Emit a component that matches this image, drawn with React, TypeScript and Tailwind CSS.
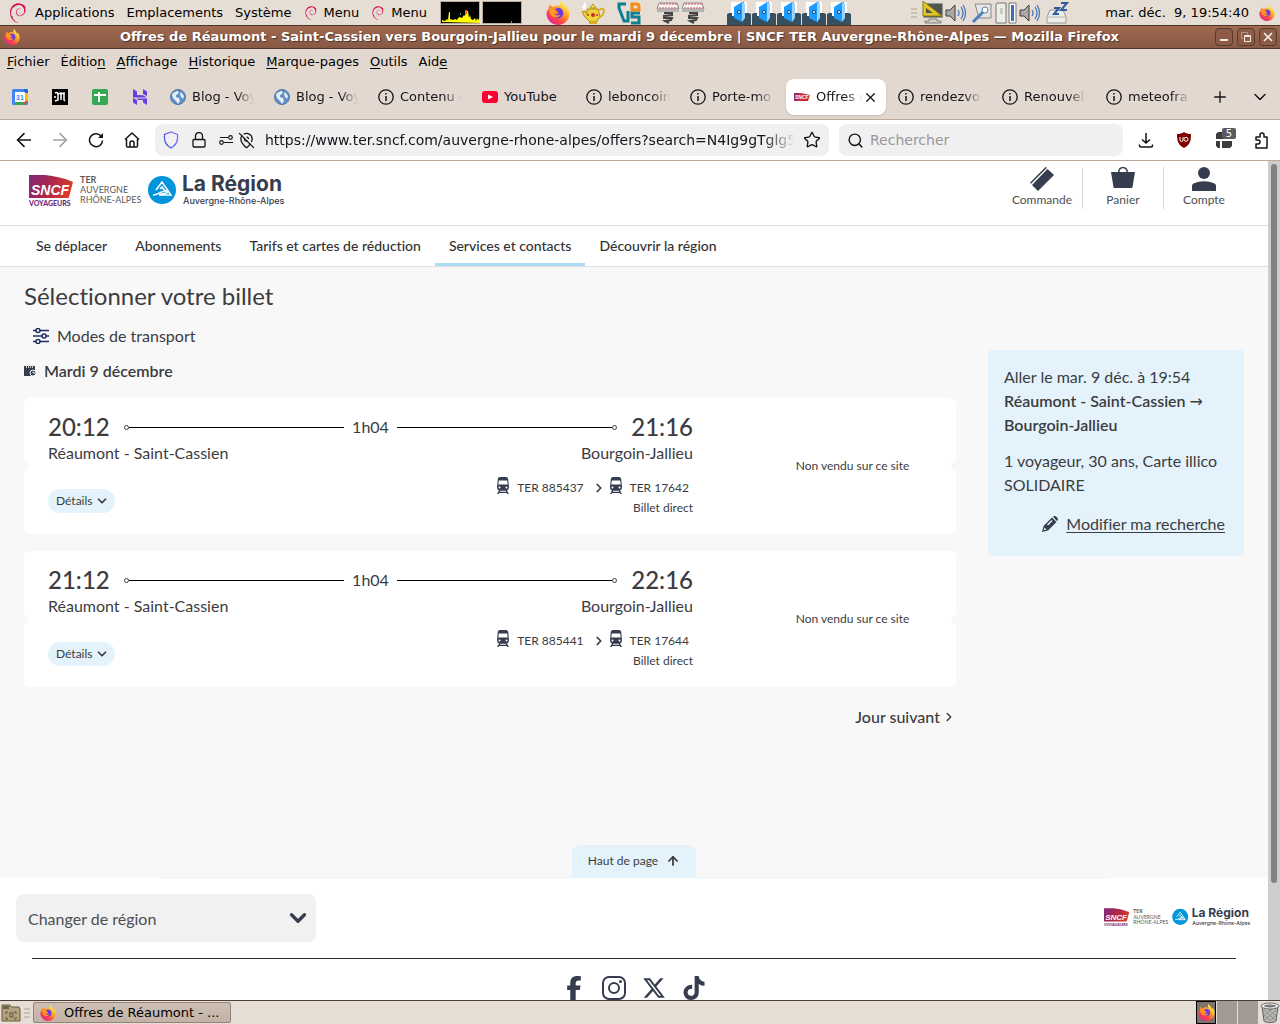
import { useState } from 'react';
import type { ReactNode } from 'react';
import { SiDebian } from 'react-icons/si';
import { FaFacebookF, FaInstagram, FaXTwitter, FaTiktok } from 'react-icons/fa6';
import {
  ArrowLeft,
  ArrowRight,
  ArrowUp,
  ChevronDown,
  ChevronRight,
  MapPinOff,
  Plus,
  Search,
  Star,
  X,
} from 'lucide-react';

const FirefoxIcon = ({ size = 16 }: { size?: number }) => (
  <svg width={size} height={size} viewBox="0 0 32 32" aria-hidden="true">
    <defs>
      <linearGradient id="fxBody" x1="0.8" y1="0.1" x2="0.2" y2="0.9">
        <stop offset="0" stopColor="#fff14a" />
        <stop offset="0.4" stopColor="#ff9a25" />
        <stop offset="0.7" stopColor="#ff4a44" />
        <stop offset="1" stopColor="#e6258a" />
      </linearGradient>
    </defs>
    <path
      d="M20 0c-2 3-2 5 0 7-5-2-8-1-10 1-2 0-3-1-4-3-2 1-3 3-2 5-3 3-4 6-3 10 2 7 8 12 15 12 9 0 16-7 15-16 0-4-2-7-4-9 0 1 0 2-1 3-1-5-4-7-6-10z"
      fill="url(#fxBody)"
    />
    <path d="M16 9c4 0 7 3 7 7s-3 7-7 7-7-3-7-6c1 1 3 2 5 1 2 0 3-2 2-3-2-1-3-2-5-1 1-3 3-5 5-5z" fill="#6b3be0" />
    <path d="M4 10c4-1 6 0 7 2l4 1c0 2-1 2-3 3-1 1-1 2 1 3 2 1 4 0 6-1-1 3-3 4-6 4-5 0-9-5-9-12z" fill="#ff9a1f" />
  </svg>
);

const SncfMark = () => (
  <>
    <defs>
      <linearGradient id="sncf" x1="0" y1="0" x2="1" y2="0.3">
        <stop offset="0" stopColor="#7d2a7d" />
        <stop offset="0.5" stopColor="#a9264f" />
        <stop offset="1" stopColor="#d8382b" />
      </linearGradient>
    </defs>
    <path d="M0 0h16c10 1 19 3 28 7l-4 15c0 1-1 1-2 1H0z" fill="url(#sncf)" />
    <text x="2" y="20" fontSize="14" fontWeight="900" fontStyle="italic" fill="#fff" fontFamily="'Liberation Sans', sans-serif">
      SNCF
    </text>
  </>
);

const RegionLogo = ({ className }: { className: string }) => (
  <svg viewBox="0 0 260 34" className={className} role="img" aria-label="SNCF Voyageurs TER Auvergne-Rhône-Alpes">
    <SncfMark />
    <g fontFamily="Lato, sans-serif">
      <text x="0" y="31" fontSize="7" fontWeight="900" fill="#6f2c79">VOYAGEURS</text>
      <g fill="#5b5b5e">
        <text x="51" y="8" fontSize="9" fontWeight="700">TER</text>
        <text x="51" y="18" fontSize="9">AUVERGNE</text>
        <text x="51" y="28" fontSize="9">RHÔNE-ALPES</text>
      </g>
    </g>
    <circle cx="133" cy="15" r="14" fill="#0095db" />
    <path
      d="M124 20c5 0 8-4 12-4l-3-4-2 2M127 15l6-8 9 13h-12M130 20c3-2 8-1 9-3l-4-2"
      fill="none"
      stroke="#fff"
      strokeWidth="1.500"
    />
    <g fontFamily="Inter, sans-serif" fill="#363d4e">
      <text x="153" y="16" fontSize="21" fontWeight="700">La Région</text>
      <text x="154" y="29" fontSize="9" fontWeight="500">Auvergne-Rhône-Alpes</text>
    </g>
  </svg>
);

const TrainIcon = () => (
  <svg width="12" height="17" viewBox="0 0 12 17" fill="#363d4e" aria-hidden="true">
    <path
      fillRule="evenodd"
      d="M3 0h6c1.200 0 2 .8 2.200 2l.8 8c0 2-.8 3-2 3.500L12 17h-1.600l-.6-1H2.200l-.6 1H0l2-3.500C.8 13 0 12 0 10l.8-8C1 .8 1.800 0 3 0zM1.800 3.500L1.300 7.500h9.400l-.5-4zM2.500 9.500a1 1 0 100 2 1 1 0 000-2zm7 0a1 1 0 100 2 1 1 0 000-2zM3.400 13.800l-.6 1h6.400l-.6-1z"
    />
  </svg>
);

const SpeakerIcon = () => (
  <svg width="22" height="22" viewBox="0 0 22 22" aria-hidden="true">
    <path d="M1 8h4l5-5v16l-5-5H1z" fill="#a8a9a6" stroke="#3b3d3a" />
    <path d="M13 8q2 3 0 6M16 5q4 6 0 12M18 3q5 8 0 16" fill="none" stroke="#4a78b5" strokeWidth="1.300" />
  </svg>
);

const DriveIcon = () => (
  <svg width="24" height="24" viewBox="0 0 24 24" aria-hidden="true">
    <path d="M4 1h16v14H4z" fill="#fff" />
    <path d="M0 13l2-1h3v3h13v-3h4l2 1v11H0z" fill="#37505f" />
    <path d="M7 6l8-5h2v17l-2 3-8-4z" fill="#1e9bff" />
    <path d="M15 1l3 2v14l-3 4z" fill="#9ad2ff" />
    <circle cx="12" cy="11" r="2" fill="#0b4f8f" />
    <circle cx="12" cy="11" r="1" fill="#fff" />
  </svg>
);

const SpringIcon = () => (
  <svg width="24" height="24" viewBox="0 0 24 24" aria-hidden="true">
    <path d="M3 2h18l2 6H1z" fill="#f6f6f6" stroke="#8b8b8b" />
    <path d="M4 3h17M3 7h19" stroke="#d2504b" strokeDasharray="2 1" />
    <path d="M1 8h22v3H1z" fill="#b4b4b4" />
    <path d="M8 12h8v2l-8 1v2l8 0-1 2-6 1 4 2" fill="none" stroke="#444" strokeWidth="2" />
  </svg>
);

const TeapotIcon = () => (
  <svg width="24" height="24" viewBox="0 0 24 24" aria-hidden="true">
    <path d="M6 8h11l2 8-4 5H9l-5-5-3-5 3-1 2 3z" fill="#f0d23c" stroke="#b48a12" />
    <path d="M18 9c7-5 6 6 0 7" fill="none" stroke="#d9ad25" strokeWidth="2" />
    <path d="M9 7l3-4 3 4z" fill="#f6e66a" stroke="#b48a12" />
    <circle cx="12" cy="14" r="2" fill="#c9302c" />
    <circle cx="7" cy="14" r="1" fill="#c9302c" />
    <circle cx="16" cy="14" r="1" fill="#c9302c" />
    <path d="M3 9C-1 5 4 5 3 1c4 3 0 4 3 7z" fill="#fff" />
    <path d="M8 21h8v2H8z" fill="#d9ad25" />
  </svg>
);

const VsIcon = () => (
  <svg width="26" height="24" viewBox="0 0 26 24" aria-hidden="true">
    <path d="M10 3H3v4l5 13h4V10M24 12h-8v4h7v6h-8" fill="none" stroke="#0e7f93" strokeWidth="3" />
    <path d="M16 9V3h5c2 0 2 1 2 3v3z" fill="none" stroke="#f08c1a" strokeWidth="3" />
  </svg>
);

const CpuGraph = () => (
  <svg width="40" height="23" viewBox="0 0 40 23" aria-hidden="true">
    <path d="M.5.5h39v22H.5z" fill="#000" stroke="#b9ac9f" />
    <path
      d="M2 21v-2l3 1 2-2 1 1 1-8h1v7l3 1 2-1 2 1 2-3 3 1 2-3 1 1 1-5h2l1 7 1-3 1 4 2 1 2-2 1 3 1-3 1 2 2-2v5z"
      fill="#ff0"
    />
    <path d="M25 9h2v4h-2z" fill="#f60" />
    <path d="M20 12h1v2h-1z" fill="#1fa7a7" />
  </svg>
);

const NetGraph = () => (
  <svg width="40" height="23" viewBox="0 0 40 23" aria-hidden="true">
    <path d="M.5.5h39v22H.5z" fill="#000" stroke="#b9ac9f" />
    <path d="M29 20h1v2h-1z" fill="#0cc" />
  </svg>
);

const Grip = () => (
  <svg width="6" height="10" viewBox="0 0 6 10" aria-hidden="true">
    <path d="M0 1h6M0 5h6M0 9h6" stroke="#cbc0b5" strokeWidth="2" />
  </svg>
);

const TopPanel = () => (
  <header className="flex h-[25px] shrink-0 items-center bg-[#e6ddd4] text-[13px] text-black">
    <div className="flex w-[440px] shrink-0 items-center">
      <SiDebian className="ml-2 mr-[7px] size-5 text-[#d70751]" />
      <button className="mr-3">Applications</button>
      <button className="mr-3">Emplacements</button>
      <button className="mr-3">Système</button>
      <SiDebian className="mr-1.5 size-3.5 text-[#d70751]" />
      <button className="mr-3">Menu</button>
      <SiDebian className="mr-1.5 size-3.5 text-[#d70751]" />
      <button>Menu</button>
    </div>
    <div className="flex flex-1 items-center">
      <CpuGraph />
      <div className="ml-0.5 flex">
        <NetGraph />
      </div>
      <div className="ml-6 flex items-center gap-[11px]">
        <FirefoxIcon size={24} />
        <TeapotIcon />
        <VsIcon />
      </div>
      <div className="ml-3.5 flex gap-px">
        <SpringIcon />
        <SpringIcon />
      </div>
      <div className="ml-[22px] flex gap-px">
        {[0, 1, 2, 3, 4].map((n) => (
          <DriveIcon key={n} />
        ))}
      </div>
    </div>
    <div className="flex shrink-0 items-center">
      <Grip />
      <svg width="24" height="24" viewBox="0 0 24 24" className="ml-1" aria-hidden="true">
        <path d="M2 2h20v15H2z" fill="#4f544d" stroke="#d8d8d4" />
        <path d="M2 0v15h19z" fill="#e2c526" stroke="#8e7a13" />
        <path d="M5 7v5h7z" fill="#4f544d" />
        <path d="M8 18h8v2h4v2H4v-2h4z" fill="#d0d0cc" stroke="#80807c" />
      </svg>
      <SpeakerIcon />
      <svg width="22" height="22" viewBox="0 0 22 22" className="ml-1" aria-hidden="true">
        <path d="M4 2h16v14H8z" fill="#e4e4e0" stroke="#888" />
        <circle cx="14" cy="8" r="3" fill="#fff" stroke="#5580b0" />
        <path d="M12 10l-10 10" stroke="#4f7fbe" strokeWidth="3" />
      </svg>
      <svg width="22" height="22" viewBox="0 0 22 22" className="ml-0.5" aria-hidden="true">
        <path d="M2 1h9v20H1V3z" fill="#eceeea" stroke="#777" />
        <path d="M5 6h3v6H5z" fill="#c9ccc5" />
        <path d="M14 1h7v20h-7z" fill="#fff" stroke="#777" />
        <path d="M16 3h3v16h-3z" fill="#3a6fb8" />
      </svg>
      <div className="ml-0.5 flex">
        <SpeakerIcon />
      </div>
      <svg width="24" height="24" viewBox="0 0 24 24" className="ml-1" aria-hidden="true">
        <path d="M5 9h13l3 7v6H2v-6z" fill="#ecece8" stroke="#9a9a96" />
        <path d="M3 16h17" stroke="#b8b8b4" />
        <path d="M9 7h5l-5 6h5M16 2h6l-6 7h6" fill="none" stroke="#2f5c9e" strokeWidth="2" />
      </svg>
      <span className="ml-9 whitespace-pre">mar. déc.  9, 19:54:40</span>
      <div className="ml-2.5 mr-[5px]">
        <FirefoxIcon size={16} />
      </div>
    </div>
  </header>
);

const WindowButton = ({ label, children }: { label: string; children: ReactNode }) => (
  <button
    aria-label={label}
    className="flex size-[18px] items-center justify-center rounded border border-[#573a2c] bg-[#8c5c49] text-[#f2e9e2]"
  >
    {children}
  </button>
);

const TitleBar = () => (
  <div className="flex h-6 shrink-0 items-center border-y border-[#4d3529] bg-gradient-to-b from-[#a1694f] to-[#865946]">
    <div className="ml-1 w-5">
      <FirefoxIcon size={16} />
    </div>
    <h1 className="flex-1 truncate text-center text-[13px] font-bold text-white [text-shadow:1px_1px_1px_#4d3529]">
      Offres de Réaumont - Saint-Cassien vers Bourgoin-Jallieu pour le mardi 9 décembre | SNCF TER Auvergne-Rhône-Alpes — Mozilla Firefox
    </h1>
    <div className="mr-[3px] flex gap-1">
      <WindowButton label="Réduire">
        <svg width="10" height="10" viewBox="0 0 10 10"><path d="M1 7h8v2H1z" fill="currentColor" /></svg>
      </WindowButton>
      <WindowButton label="Restaurer">
        <svg width="10" height="10" viewBox="0 0 10 10" fill="none" stroke="currentColor">
          <path d="M2.500 6.500h-2v-6h6v2" opacity="0.400" />
          <path d="M3.500 3.500h6v6h-6zM3 4.500h6" />
        </svg>
      </WindowButton>
      <WindowButton label="Fermer">
        <X size={14} strokeWidth={3} />
      </WindowButton>
    </div>
  </div>
);

// The access key is the part between the two others
const menus = [
  ['', 'F', 'ichier'],
  ['Éditio', 'n', ''],
  ['', 'A', 'ffichage'],
  ['', 'H', 'istorique'],
  ['', 'M', 'arque-pages'],
  ['', 'O', 'utils'],
  ['Aid', 'e', ''],
];

const MenuBar = () => (
  <nav className="flex h-[26px] shrink-0 items-center gap-[11px] bg-[#e2d8cf] pl-[7px] text-[13px] text-black">
    {menus.map(([before, key, after]) => (
      <button key={before + key + after}>
        {before}
        <span className="underline underline-offset-2">{key}</span>
        {after}
      </button>
    ))}
  </nav>
);

const GlobeIcon = () => (
  <svg width="16" height="16" viewBox="0 0 16 16" aria-hidden="true">
    <circle cx="8" cy="8" r="7.500" fill="#5f8fc6" stroke="#54779f" />
    <path d="M3 4l4-2 2 1-1 2-2 1v2l3 1 1 3-2 3-2-3-3-3-1-3zM11 3l3 4-1 3-2-2-1-3z" fill="#e3edf6" />
  </svg>
);

const InfoIcon = () => (
  <svg width="16" height="16" viewBox="0 0 16 16" fill="none" stroke="currentColor" aria-hidden="true">
    <circle cx="8" cy="8" r="7.200" strokeWidth="1.300" />
    <path d="M8 7v5" strokeWidth="1.500" />
    <path d="M8 4v1.500" strokeWidth="1.500" />
  </svg>
);

const SncfFavicon = () => (
  <svg width="16" height="16" viewBox="0 0 16 16" aria-hidden="true">
    <path d="M0 4h7l9 2-2 6H0z" fill="#d02c38" />
    <path d="M0 4h4v8H0z" fill="#8f2873" />
    <text x="1" y="10" fontSize="5" fontWeight="900" fontStyle="italic" fill="#fff" fontFamily="'Liberation Sans', sans-serif">
      SNCF
    </text>
  </svg>
);

const YouTubeIcon = () => (
  <svg width="16" height="16" viewBox="0 0 16 16" aria-hidden="true">
    <rect y="2" width="16" height="12" rx="3" fill="#ff0033" />
    <path d="M6 5.500l5 2.500-5 2.500z" fill="#fff" />
  </svg>
);

const pinned = [
  {
    name: 'Agenda',
    icon: (
      <svg width="16" height="16" viewBox="0 0 16 16">
        <rect width="16" height="16" rx="1.500" fill="#4285f4" />
        <path d="M12 0h2.500A1.500 1.500 0 0116 1.500V4h-4z" fill="#1967d2" />
        <path d="M12 4h4v8h-4z" fill="#fbbc04" />
        <path d="M4 12h8v4H4z" fill="#34a853" />
        <path d="M12 12h4l-4 4z" fill="#ea4335" />
        <path d="M3 3h10v10H3z" fill="#fff" />
        <text x="4" y="11" fontSize="7" fontWeight="700" fill="#4285f4" fontFamily="'Liberation Sans', sans-serif">31</text>
      </svg>
    ),
  },
  {
    name: 'Le Monde',
    icon: (
      <svg width="16" height="16" viewBox="0 0 16 16">
        <path d="M0 0h16v16H0z" />
        <path d="M3 4c2-1 3 0 3 1v6l-3 1M6 5l3-1v7M9 5l3-1v7l1 1M3 7v2" fill="none" stroke="#fff" strokeWidth="1.500" />
      </svg>
    ),
  },
  {
    name: 'Sheets',
    icon: (
      <svg width="16" height="16" viewBox="0 0 16 16">
        <rect width="16" height="16" rx="2" fill="#34a853" />
        <path d="M7 3v10M2 6h12" stroke="#fff" strokeWidth="2" />
      </svg>
    ),
  },
  {
    name: 'Hostinger',
    icon: (
      <svg width="16" height="16" viewBox="0 0 16 16" fill="#673de6">
        <path d="M1 0l4 2.500V6l6 .2 4 2.300H1zM11 0l4 2.500V7l-4-2zM1 9l4 2v5l-4-2.500zM5 9.500h10V16l-4-2.500V11H6z" />
      </svg>
    ),
  },
];

const tabs = [
  { id: 1, title: 'Blog - Voy', icon: <GlobeIcon /> },
  { id: 2, title: 'Blog - Voy', icon: <GlobeIcon /> },
  { id: 3, title: 'Contenu d', icon: <InfoIcon /> },
  { id: 4, title: 'YouTube', icon: <YouTubeIcon />, fits: true },
  { id: 5, title: 'leboncoin', icon: <InfoIcon /> },
  { id: 6, title: 'Porte-mo', icon: <InfoIcon /> },
  { id: 7, title: 'Offres d', icon: <SncfFavicon />, active: true },
  { id: 8, title: 'rendezvo', icon: <InfoIcon /> },
  { id: 9, title: 'Renouvell', icon: <InfoIcon /> },
  { id: 10, title: 'meteofra', icon: <InfoIcon /> },
];

const TabStrip = () => (
  <div className="flex h-[45px] shrink-0 items-center border-b border-[#bba99a] bg-[#e2d8cf] text-[13px] text-[#15141a]">
    {pinned.map((tab) => (
      <button key={tab.name} aria-label={tab.name} className="flex w-10 shrink-0 justify-center">
        {tab.icon}
      </button>
    ))}
    {tabs.map((tab) => (
      <div
        key={tab.id}
        className={`mx-0.5 flex h-9 max-w-[100px] min-w-0 flex-1 items-center rounded-lg pl-2 ${
          tab.active ? 'bg-white pr-2 shadow' : 'pr-2'
        }`}
      >
        <button className="flex min-w-0 flex-1 items-center gap-1.5">
          <span className="shrink-0">{tab.icon}</span>
          <span
            className={`min-w-0 flex-1 overflow-hidden whitespace-nowrap text-left ${
              tab.fits ? '' : '[mask-image:linear-gradient(to_left,transparent,black_18px)]'
            }`}
          >
            {tab.title}
          </span>
        </button>
        {tab.active && (
          <button aria-label="Fermer l’onglet">
            <X size={15} />
          </button>
        )}
      </div>
    ))}
    <button aria-label="Nouvel onglet" className="flex w-10 shrink-0 justify-center">
      <Plus size={18} strokeWidth={1.8} />
    </button>
    <button aria-label="Tous les onglets" className="ml-auto flex w-10 shrink-0 justify-center">
      <ChevronDown size={20} strokeWidth={1.8} />
    </button>
  </div>
);

const Toolbar = () => (
  <div className="flex h-[41px] shrink-0 items-center border-b border-[#bba99a] bg-white text-sm text-[#15141a]">
    <div className="flex w-[155px] shrink-0 items-center pl-1.5">
      <button aria-label="Précédent" className="flex w-9 justify-center"><ArrowLeft size={22} strokeWidth={1.8} /></button>
      <button aria-label="Suivant" className="flex w-9 justify-center text-[#a3a3a5]"><ArrowRight size={22} strokeWidth={1.8} /></button>
      <button aria-label="Actualiser" className="flex w-9 justify-center">
        <svg width="16" height="16" viewBox="0 0 16 16" fill="none" stroke="currentColor" strokeWidth="1.500">
          <path d="M13 4a6.500 6.500 0 101.500 4.500" />
          <path d="M15 1v5h-5z" fill="currentColor" stroke="none" />
        </svg>
      </button>
      <button aria-label="Accueil" className="flex w-9 justify-center">
        <svg width="16" height="16" viewBox="0 0 16 16" fill="none" stroke="currentColor" strokeWidth="1.500" strokeLinejoin="round">
          <path d="M1 7.500l7-6.500 7 6.500M2.500 7v7a1 1 0 001 1h9a1 1 0 001-1V7M6 15v-4a2 2 0 014 0v4" />
        </svg>
      </button>
    </div>
    <div className="flex h-8 flex-1 items-center rounded-lg bg-[#f0f0f1] px-2">
      <svg width="16" height="18" viewBox="0 0 16 18" fill="none" strokeWidth="1.300" className="shrink-0" aria-hidden="true">
        <defs>
          <linearGradient id="shield" x1="0" y1="1" x2="1" y2="0">
            <stop offset="0" stopColor="#2b50e0" />
            <stop offset="1" stopColor="#9a6bf5" />
          </linearGradient>
        </defs>
        <path d="M8 1l6.500 2.500V7c0 5-3 8-6.500 10C4.500 15 1.500 12 1.500 7V3.500z" stroke="url(#shield)" />
      </svg>
      <svg width="14" height="16" viewBox="0 0 14 16" fill="none" stroke="currentColor" strokeWidth="1.300" className="ml-[13px] shrink-0" aria-hidden="true">
        <path d="M2 7.500h10a1 1 0 011 1V14a1 1 0 01-1 1H2a1 1 0 01-1-1V8.500a1 1 0 011-1zM3.500 7V4a3.500 3.500 0 017 0v3" />
      </svg>
      <svg width="16" height="12" viewBox="0 0 16 12" fill="none" stroke="currentColor" strokeWidth="1.200" className="ml-3 shrink-0" aria-hidden="true">
        <path d="M2 3.500h8M6 8.500h9" />
        <circle cx="12.500" cy="3.500" r="1.800" />
        <circle cx="3.500" cy="8.500" r="1.800" />
      </svg>
      <MapPinOff size={17} strokeWidth={1.800} className="ml-1 shrink-0" />
      <input
        aria-label="Adresse"
        defaultValue="https://www.ter.sncf.com/auvergne-rhone-alpes/offers?search=N4Ig9gTglg5l"
        className="ml-2.5 min-w-0 flex-1 bg-transparent outline-none [mask-image:linear-gradient(to_left,transparent,black_32px)]"
      />
      <button aria-label="Marquer cette page" className="ml-2"><Star size={18} strokeWidth={1.800} /></button>
    </div>
    <div className="ml-2.5 flex h-8 w-[284px] shrink-0 items-center gap-1.5 rounded-lg bg-[#f0f0f1] px-2">
      <Search size={17} strokeWidth={2} />
      <input aria-label="Rechercher" placeholder="Rechercher" className="min-w-0 flex-1 bg-transparent outline-none placeholder:text-[#98989b]" />
    </div>
    <div className="ml-3.5 flex w-[143px] shrink-0 items-center">
      <button aria-label="Téléchargements" className="ml-px">
        <svg width="16" height="16" viewBox="0 0 16 16" fill="none" stroke="currentColor" strokeWidth="1.500">
          <path d="M8 1v10M4 7.500L8 11l4-3.500M1.500 12.500v1a1.500 1.500 0 001.500 1.500h10a1.500 1.500 0 001.500-1.500v-1" />
        </svg>
      </button>
      <button aria-label="uBlock Origin" className="ml-[22px]">
        <svg width="16" height="16" viewBox="0 0 16 16">
          <path d="M8 0c2 1.500 4 2 7 2 0 7-1 11-7 14C2 13 1 9 1 2c3 0 5-.5 7-2z" fill="#800000" />
          <path d="M4 5v3a1.200 1.200 0 003 0V5" fill="none" stroke="#fff" />
          <circle cx="10" cy="7.300" r="2" fill="none" stroke="#fff" />
        </svg>
      </button>
      <button aria-label="Extension" className="relative ml-6">
        <svg width="17" height="16" viewBox="0 0 17 16" fill="#3c3c3f">
          <path d="M2 0h6v7H0V2zM9 0h7v7H9zM0 9h4v7H2l-2-2zM6 9h10v5l-2 2H6z" />
        </svg>
        <span className="absolute -top-1 left-1.5 w-3.5 rounded-xs bg-[#5b5b5e] text-center text-[10px] leading-[11px] text-white">5</span>
      </button>
      <button aria-label="Extensions" className="ml-[21px]">
        <svg width="16" height="17" viewBox="0 0 16 17" fill="none" stroke="currentColor" strokeWidth="1.500" strokeLinejoin="round">
          <path d="M2 5h4V3a2 2 0 014 0v2h3v11H2v-4h2a2 2 0 000-4H2z" />
        </svg>
      </button>
    </div>
  </div>
);

const accountLinks = [
  {
    label: 'Commande',
    icon: (
      <svg width="24" height="24" viewBox="0 0 24 24" fill="#363d4e">
        <path d="M17.500 2L24 8 8 24l-6-6zM15.500 0l1.500.8L1 16.800 0 15.800z" />
      </svg>
    ),
  },
  {
    label: 'Panier',
    icon: (
      <svg width="24" height="24" viewBox="0 0 24 24" fill="#363d4e">
        <path fillRule="evenodd" d="M0 5h7c0-7 10-7 10 0h7l-2.500 15c0 .6-.5 1-1 1H3.500c-.5 0-1-.4-1-1zm8.500 0h7c0-5-7-5-7 0z" />
      </svg>
    ),
  },
  {
    label: 'Compte',
    icon: (
      <svg width="24" height="24" viewBox="0 0 24 24" fill="#363d4e">
        <circle cx="12" cy="6" r="6" />
        <path d="M0 24v-5c0-1 .5-2 1.500-2.500 7-3 14-3 21 0 1 .5 1.500 1.500 1.500 2.500v5z" />
      </svg>
    ),
  },
];

const siteNav = [
  { label: 'Se déplacer' },
  { label: 'Abonnements' },
  { label: 'Tarifs et cartes de réduction' },
  { label: 'Services et contacts', current: true },
  { label: 'Découvrir la région' },
];

const SiteHeader = () => (
  <>
    <div className="flex h-[65px] items-start justify-between border-b border-[#dedede] bg-white pl-[29px] pr-6">
      <a href="#accueil" className="mt-[14px]">
        <RegionLogo className="h-[34px] w-[260px]" />
      </a>
      <div className="mt-1.5 flex">
        {accountLinks.map((link) => (
          <a
            key={link.label}
            href="#compte"
            className="flex h-[42px] w-[81px] flex-col items-center border-l border-[#d9d9d9] text-xs text-[#4d4f53] first:border-transparent"
          >
            {link.icon}
            <span className="mt-px">{link.label}</span>
          </a>
        ))}
      </div>
    </div>
    <nav className="flex h-[41px] border-b border-[#dedede] bg-white pl-[22px] text-sm font-medium text-[#333]">
      {siteNav.map((item) => (
        <a
          key={item.label}
          href="#menu"
          className={`flex items-center rounded-t-xs px-3.5 ${
            item.current ? 'bg-[linear-gradient(to_top,#aadcf5_3px,transparent_3px)]' : ''
          }`}
        >
          {item.label}
        </a>
      ))}
    </nav>
  </>
);

const offers = [
  { departure: '20:12', arrival: '21:16', trains: ['TER 885437', 'TER 17642'] },
  { departure: '21:12', arrival: '22:16', trains: ['TER 885441', 'TER 17644'] },
];

const Dot = () => <span className="size-[5px] shrink-0 rounded-full border border-[#3c3c3f]" />;

const OfferCard = ({ offer }: { offer: (typeof offers)[number] }) => (
  <li className="relative flex h-[136px] items-center rounded-md bg-white">
    <span className="absolute -left-1 top-16 size-[9px] rounded-full bg-[#f8f8f8]" />
    <span className="absolute -right-1 top-16 size-[9px] rounded-full bg-[#f8f8f8]" />
    <div className="h-full flex-1 pl-6 pt-[15px]">
      <div className="flex items-center">
        <span className="text-2xl/7 font-medium">{offer.departure}</span>
        <span className="ml-3.5 flex flex-1 items-center">
          <Dot />
          <span className="h-px flex-1 bg-black" />
          <span className="px-2">1h04</span>
          <span className="h-px flex-1 bg-black" />
          <Dot />
        </span>
        <span className="ml-3.5 text-2xl/7 font-medium">{offer.arrival}</span>
      </div>
      <div className="flex justify-between">
        <span>Réaumont - Saint-Cassien</span>
        <span>Bourgoin-Jallieu</span>
      </div>
      <div className="mt-[13px] flex items-center justify-between text-xs">
        <button className="mt-1.5 flex h-6 items-center gap-0.5 rounded-full bg-[#e4f3fb] pl-2 pr-1.5">
          Détails
          <ChevronDown size={14} strokeWidth={3} />
        </button>
        <div className="flex flex-col items-end">
          <div className="flex h-5 items-center pr-1">
            <span className="mb-1.5"><TrainIcon /></span>
            <span className="ml-2">{offer.trains[0]}</span>
            <ChevronRight size={14} strokeWidth={3} className="ml-2 mr-1" />
            <span className="mb-1.5"><TrainIcon /></span>
            <span className="ml-2">{offer.trains[1]}</span>
          </div>
          <span className="leading-5">Billet direct</span>
        </div>
      </div>
    </div>
    <p className="ml-14 w-[207px] text-center text-xs">Non vendu sur ce site</p>
  </li>
);

const SearchSummary = () => (
  <aside className="mt-[83px] w-64 shrink-0 self-start rounded bg-[#e4f3fb] px-4 pb-4 pt-[15px]">
    <p>Aller le mar. 9 déc. à 19:54</p>
    <p className="font-semibold">
      Réaumont - Saint-Cassien <span className="font-['DejaVu_Sans'] text-base/5 font-normal">→</span> Bourgoin-Jallieu
    </p>
    <p className="mt-3">1 voyageur, 30 ans, Carte illico SOLIDAIRE</p>
    <a href="#recherche" className="mt-[15px] flex items-center justify-end gap-2 pb-1 pr-[3px] underline underline-offset-2">
      <svg width="16" height="16" viewBox="0 0 16 16" fill="#363d4e" aria-hidden="true">
        <path fillRule="evenodd" d="M10 1.500L14.500 6 6 14.500 0 16l1.500-6zM2.500 11.500l-.8 2.800 2.800-.8zM6 9.500l4.500-4.500-1-1L5 8.500zM11 .8c1.200-1.200 2.300-1 3.300 0l1 1c1 1 .9 2-.3 3.200z" />
      </svg>
      Modifier ma recherche
    </a>
  </aside>
);

const SlidersIcon = () => (
  <svg width="16" height="16" viewBox="0 0 16 16" fill="none" stroke="#1c2f5c" strokeWidth="1.500" aria-hidden="true">
    <path d="M0 2.500h3M7 2.500h9M0 8h9M13 8h3M0 13.500h3M7 13.500h9" />
    <circle cx="5" cy="2.500" r="2" />
    <circle cx="11" cy="8" r="2" />
    <circle cx="5" cy="13.500" r="2" />
  </svg>
);

const CalendarIcon = () => (
  <svg width="12" height="12" viewBox="0 0 12 12" aria-hidden="true">
    <path d="M0 1h11v10H0z" fill="#363d4e" />
    <path d="M2.500 0v3M4.500 0v3M6.500 0v3M8.500 0v3" stroke="#c9ccd3" />
    <circle cx="9" cy="8" r="3" fill="#363d4e" stroke="#f8f8f8" />
    <path d="M9 6.500V8h2" stroke="#f8f8f8" fill="none" />
  </svg>
);

const SiteFooter = () => (
  <footer className="bg-white">
    <div className="flex items-center justify-between pl-4 pr-[15px] pt-4">
      <div className="relative w-[300px]">
        <select
          aria-label="Changer de région"
          className="h-12 w-full appearance-none rounded-lg bg-[#f1f1f1] px-3 pt-0.5 text-[#4d4f53]"
        >
          <option>Changer de région</option>
        </select>
        <ChevronDown size={26} strokeWidth={3} className="pointer-events-none absolute right-[5px] top-[11px] text-[#363d4e]" />
      </div>
      <RegionLogo className="h-5 w-[149px]" />
    </div>
    <div className="mx-8 mt-4 flex justify-center gap-4 border-t border-[#2b2b2b] pt-[17px] text-[#363d4e]">
      <a href="#facebook" aria-label="Facebook"><FaFacebookF size={24} /></a>
      <a href="#instagram" aria-label="Instagram">
        <svg width="24" height="24" viewBox="0 0 24 24" fill="none" stroke="currentColor" strokeWidth="2">
          <rect x="1" y="1" width="22" height="22" rx="6" />
          <circle cx="12" cy="12" r="5" />
          <circle cx="18.500" cy="5.500" r="1.500" fill="currentColor" stroke="none" />
        </svg>
      </a>
      <a href="#x" aria-label="X"><FaXTwitter size={24} /></a>
      <a href="#tiktok" aria-label="TikTok"><FaTiktok size={24} /></a>
    </div>
  </footer>
);

const TaskBar = () => (
  <footer className="flex h-6 shrink-0 items-center border-t border-[#4d3b35] bg-[#e6ddd4] text-[13px] text-black">
    <button aria-label="Bureau" className="ml-px">
      <svg width="20" height="20" viewBox="0 0 20 20">
        <path d="M1 2h8l1 2h8l1 2v12H1z" fill="#b3a280" stroke="#6d5a37" />
        <path d="M2 3h6v3H2z" fill="#6f6250" />
        <path d="M5 9h2M5 9v2M15 9h-2M15 9v2M5 16h2M5 16v-2M15 16h-2M15 16v-2M9 10h3v4H9z" fill="none" stroke="#5e5237" />
      </svg>
    </button>
    <span className="ml-[3px]"><Grip /></span>
    <button className="ml-[3px] flex h-[21px] w-[198px] items-center gap-2 rounded-xs border border-[#93857a] bg-gradient-to-b from-[#cdbfb4] to-[#c3b3a6] pl-1.5">
      <FirefoxIcon size={16} />
      Offres de Réaumont - ...
    </button>
    <div className="ml-auto flex h-full gap-px">
      <button aria-label="Espace 1" className="flex w-5 items-center justify-center border border-black bg-[#7b736d]">
        <FirefoxIcon size={17} />
      </button>
      <button aria-label="Espace 2" className="w-5 bg-[#a19a94]" />
      <button aria-label="Espace 3" className="w-5 bg-[#a19a94]" />
      <button aria-label="Corbeille" className="flex w-[21px] items-center justify-center">
        <svg width="20" height="21" viewBox="0 0 20 21">
          <path d="M2 4h16l-2 15c-3 2-9 2-12 0z" fill="#b9bab7" stroke="#5c5d5a" />
          <path d="M4 8l11 10M4 13l7 6M8 7l8 7M16 8L5 18M16 13l-6 6M12 7l-8 7" stroke="#8a8b88" />
          <ellipse cx="10" cy="4" rx="9" ry="3" fill="#ececea" stroke="#6b6c69" />
          <ellipse cx="10" cy="4" rx="6" ry="1.500" fill="#777" />
        </svg>
      </button>
    </div>
  </footer>
);

export default function App() {
  const [day] = useState('Mardi 9 décembre');

  return (
    <div className="flex h-screen flex-col overflow-hidden font-['DejaVu_Sans',sans-serif]">
      <TopPanel />
      <TitleBar />
      <MenuBar />
      <TabStrip />
      <Toolbar />

      {/* Page viewport */}
      <div className="flex min-h-0 flex-1">
        <div className="flex min-w-0 flex-1 flex-col overflow-hidden bg-[#f8f8f8] font-[Lato,sans-serif] text-[#3c3c3f] [font-variant-ligatures:none]">
          <SiteHeader />
          <main className="flex gap-8 px-6">
            <section className="min-w-0 flex-1">
              <h2 className="mt-[13px] text-2xl">Sélectionner votre billet</h2>
              <button className="ml-[9px] mt-3 flex items-center gap-2">
                <SlidersIcon />
                Modes de transport
              </button>
              <h3 className="mt-[11px] flex items-center gap-2 font-semibold">
                <CalendarIcon />
                {day}
              </h3>
              <ul className="mt-[15px] space-y-[17px]">
                {offers.map((offer) => (
                  <OfferCard key={offer.departure} offer={offer} />
                ))}
              </ul>
              <div className="mt-[18px] flex justify-end">
                <button className="flex items-center gap-0.5 font-medium">
                  Jour suivant
                  <ChevronRight size={14} strokeWidth={2.5} />
                </button>
              </div>
            </section>
            <SearchSummary />
          </main>
          <div className="mx-40 mt-[116px] flex justify-center border-b border-[#e4f3fb]">
            <a href="#haut" className="flex h-8 items-center gap-2 rounded-t-lg bg-[#e4f3fb] px-4 text-xs">
              Haut de page
              <ArrowUp size={14} strokeWidth={3} />
            </a>
          </div>
          <SiteFooter />
        </div>
        <div className="w-3 shrink-0 bg-[#cdcdcd] px-[3px] pt-[3px]">
          <div className="h-[86%] rounded-full bg-[#82827e]" />
        </div>
      </div>

      <TaskBar />
    </div>
  );
}
